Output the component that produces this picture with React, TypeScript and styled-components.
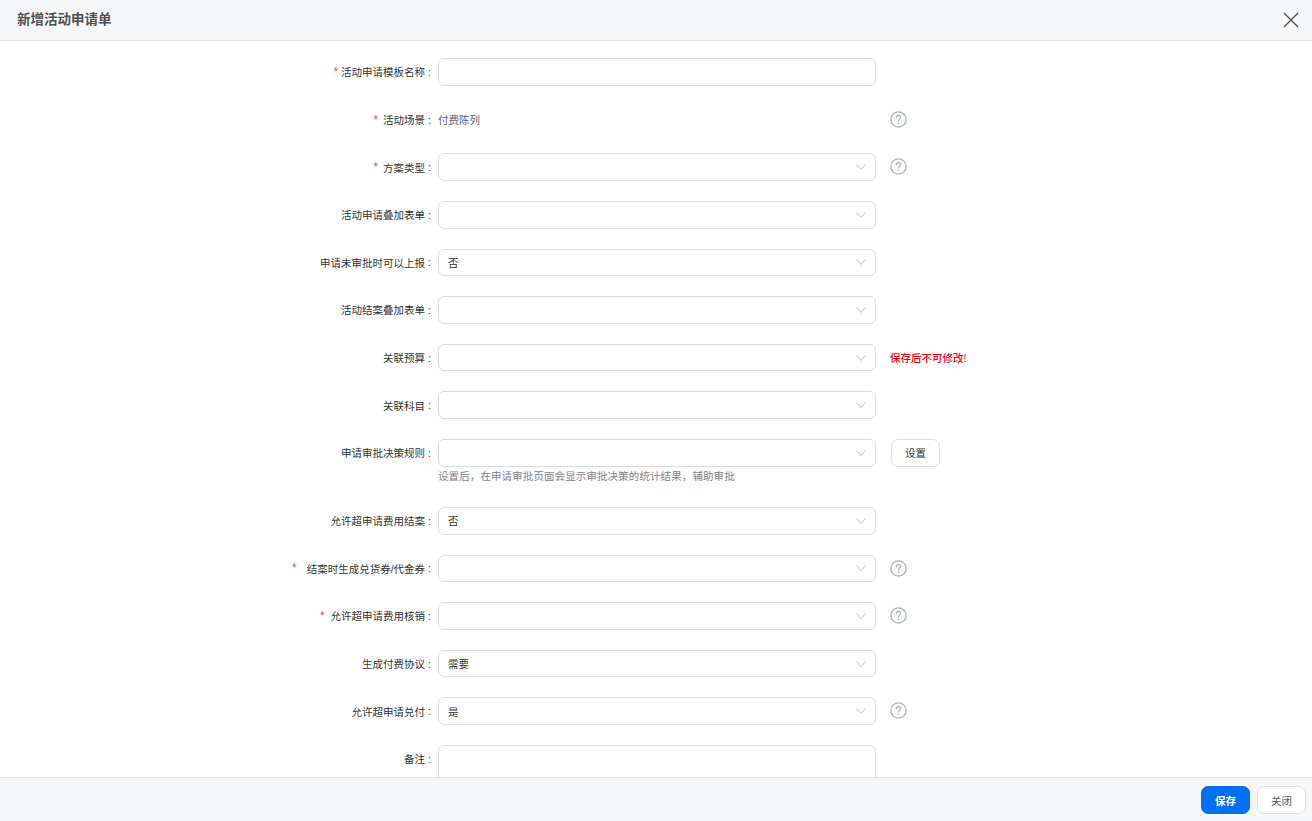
import React from "react";
import styled, { createGlobalStyle } from "styled-components";

const GlobalStyle = createGlobalStyle`
  html, body {
    margin: 0;
    padding: 0;
    height: 100%;
    background: #fff;
    font-family: "Liberation Sans", "Noto Sans CJK SC", sans-serif;
  }
  #root {
    height: 100%;
  }
`;

const Page = styled.div`
  height: 821px;
  display: flex;
  flex-direction: column;
  overflow: hidden;
`;

const Header = styled.div`
  height: 40px;
  flex: none;
  display: flex;
  align-items: center;
  justify-content: space-between;
  padding: 0 13px 0 17px;
  background: #f6f7f9;
  border-bottom: 1px solid #e2e4e8;
`;

const Title = styled.div`
  font-size: 13.5px;
  font-weight: 700;
  color: #505050;
  margin-top: -4px;
`;

const CloseIcon = styled.svg`
  width: 16px;
  height: 16px;
  display: block;
`;

const Body = styled.div`
  flex: 1;
  min-height: 0;
  overflow: hidden;
  padding-top: 17.2px;
`;

const Row = styled.div<{ $after?: number }>`
  display: flex;
  align-items: flex-start;
  margin-bottom: ${(p) => p.$after ?? 20}px;
`;

const Label = styled.div`
  width: 431px;
  height: 27.6px;
  flex: none;
  display: flex;
  align-items: center;
  justify-content: flex-end;
  font-size: 10.5px;
  color: #333;
  margin-right: 7px;
  white-space: nowrap;
`;

const Colon = styled.span`
  margin-left: 3px;
`;

const Star = styled.span<{ $gap: number }>`
  color: #f5484d;
  font-size: 12px;
  margin-right: ${(p) => p.$gap}px;
`;

const Control = styled.div`
  width: 438px;
  flex: none;
`;

const InputBox = styled.div`
  box-sizing: border-box;
  width: 100%;
  height: 27.6px;
  background: #fff;
  border: 1px solid #d9dbdf;
  border-radius: 6px;
`;

const SelectBox = styled(InputBox)`
  display: flex;
  align-items: center;
  justify-content: space-between;
  padding: 0 9px;
  font-size: 10.5px;
  color: #333;
`;

const Chevron = styled.svg`
  width: 10px;
  height: 6px;
  display: block;
`;

const TextArea = styled(InputBox)`
  height: 64px;
`;

const PlainValue = styled.div`
  height: 27.6px;
  display: flex;
  align-items: center;
  font-size: 10.5px;
  color: #606266;
`;

const Hint = styled.div`
  font-size: 10.5px;
  line-height: 16px;
  letter-spacing: 0.1px;
  color: #808388;
  margin-top: 1px;
  height: 19px;
`;

const Aside = styled.div`
  height: 27.6px;
  margin-left: 14px;
  display: flex;
  align-items: center;
`;

const HelpIcon = styled.svg`
  width: 17px;
  height: 17px;
  display: block;
  margin-top: -0.6px;
`;

const Warning = styled.span`
  font-size: 10.5px;
  font-weight: 500;
  color: #f0000f;
`;

const Button = styled.button`
  box-sizing: border-box;
  width: 49px;
  height: 28px;
  border-radius: 7px;
  border: 1px solid #dcdee2;
  background: #fff;
  color: #555;
  font-family: inherit;
  font-size: 10.5px;
  padding: 0;
`;

const SettingButton = styled(Button)`
  color: #333;
  margin-left: 1px;
`;

const PrimaryButton = styled(Button)`
  background: #0070f3;
  border-color: #0070f3;
  color: #fff;
  font-weight: 700;
`;

const Footer = styled.div`
  height: 44px;
  flex: none;
  box-sizing: border-box;
  display: flex;
  align-items: center;
  justify-content: flex-end;
  gap: 7px;
  padding: 1px 6px 0 0;
  background: #f6f7f9;
  border-top: 1px solid #e2e4e8;
`;

const Help = () => (
  <HelpIcon viewBox="0 0 17 17" fill="none">
    <circle cx="8.5" cy="8.5" r="7.6" stroke="#a9afc2" strokeWidth="1.3" />
    <path
      d="M6.4 6.7c0-1.2.9-2 2.1-2s2.1.8 2.1 1.9c0 1.7-2.1 1.7-2.1 3.5"
      stroke="#a9afc2"
      strokeWidth="1.2"
      strokeLinecap="round"
    />
    <circle cx="8.5" cy="12.3" r=".8" fill="#a9afc2" />
  </HelpIcon>
);

const Select = ({ value }: { value?: string }) => (
  <SelectBox>
    <span>{value}</span>
    <Chevron viewBox="0 0 10 6" fill="none">
      <path d="M.5.5L5 5.5 9.5.5" stroke="#b4b8bf" strokeWidth="1" />
    </Chevron>
  </SelectBox>
);

type FieldProps = {
  label: string;
  star?: number;
  after?: number;
  aside?: React.ReactNode;
  children: React.ReactNode;
};

const Field = ({ label, star, after, aside, children }: FieldProps) => (
  <Row $after={after}>
    <Label>
      {star !== undefined && <Star $gap={star}>*</Star>}
      {label}
      <Colon>:</Colon>
    </Label>
    <Control>{children}</Control>
    {aside && <Aside>{aside}</Aside>}
  </Row>
);

export default function App() {
  return (
    <Page>
      <GlobalStyle />
      <Header>
        <Title>新增活动申请单</Title>
        <CloseIcon viewBox="0 0 16 16" fill="none">
          <path d="M1 1l14 14M15 1L1 15" stroke="#444" strokeWidth="1.1" />
        </CloseIcon>
      </Header>
      <Body>
        <Field label="活动申请模板名称" star={3}>
          <InputBox />
        </Field>
        <Field label="活动场景" star={5} aside={<Help />}>
          <PlainValue>付费陈列</PlainValue>
        </Field>
        <Field label="方案类型" star={5} aside={<Help />}>
          <Select />
        </Field>
        <Field label="活动申请叠加表单">
          <Select />
        </Field>
        <Field label="申请未审批时可以上报">
          <Select value="否" />
        </Field>
        <Field label="活动结案叠加表单">
          <Select />
        </Field>
        <Field label="关联预算" aside={<Warning>保存后不可修改!</Warning>}>
          <Select />
        </Field>
        <Field label="关联科目">
          <Select />
        </Field>
        <Field
          label="申请审批决策规则"
          after={20.4}
          aside={<SettingButton>设置</SettingButton>}
        >
          <Select />
          <Hint>设置后，在申请审批页面会显示审批决策的统计结果，辅助审批</Hint>
        </Field>
        <Field label="允许超申请费用结案">
          <Select value="否" />
        </Field>
        <Field label="结案时生成兑货券/代金券" star={10} aside={<Help />}>
          <Select />
        </Field>
        <Field label="允许超申请费用核销" star={6} aside={<Help />}>
          <Select />
        </Field>
        <Field label="生成付费协议">
          <Select value="需要" />
        </Field>
        <Field label="允许超申请兑付" aside={<Help />}>
          <Select value="是" />
        </Field>
        <Field label="备注">
          <TextArea />
        </Field>
      </Body>
      <Footer>
        <PrimaryButton>保存</PrimaryButton>
        <Button>关闭</Button>
      </Footer>
    </Page>
  );
}
